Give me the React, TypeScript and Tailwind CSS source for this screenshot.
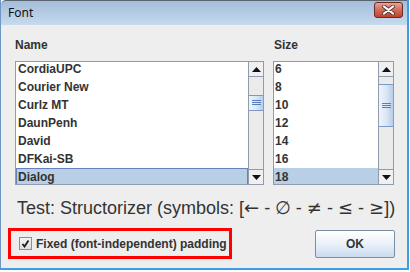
import React from "react";

const names = ["CordiaUPC", "Courier New", "Curlz MT", "DaunPenh", "David", "DFKai-SB", "Dialog"];
const sizes = ["6", "8", "10", "12", "14", "16", "18"];

function ScrollBar({ thumbTop, thumbH }: { thumbTop: number; thumbH: number }) {
  return (
    <div className="w-[15px] h-full border-l border-[#8e9cae] bg-[#ebebeb] relative flex flex-col justify-between">
      <div className="h-[15px] border-b border-[#8e9cae] bg-[#f0f0f0] flex items-center justify-center">
        <svg width="9" height="5" viewBox="0 0 9 5"><path d="M0 5 L4.5 0 L9 5 Z" fill="#111" /></svg>
      </div>
      <div
        className="absolute left-0 right-0 border-y border-[#7b98c6] bg-gradient-to-r from-[#eef4fb] via-[#dce8f6] to-[#b7cde8] flex items-center justify-center"
        style={{ top: thumbTop, height: thumbH }}
      >
        <svg width="9" height="6" viewBox="0 0 9 6">
          <path d="M0 0.5 H9 M0 2.5 H9 M0 4.5 H9" stroke="#5a7fb8" strokeWidth="1" />
        </svg>
      </div>
      <div className="h-[15px] border-t border-[#8e9cae] bg-[#f0f0f0] flex items-center justify-center">
        <svg width="9" height="5" viewBox="0 0 9 5"><path d="M0 0 L4.5 5 L9 0 Z" fill="#111" /></svg>
      </div>
    </div>
  );
}

export default function App() {
  const dialog = { fontFamily: '"Liberation Sans", Arial, sans-serif' };
  const sym = { fontFamily: '"DejaVu Sans", sans-serif' };
  return (
    <div className="w-[410px] h-[272px] bg-white overflow-hidden" style={dialog}>
      <div className="w-[409px] h-[270px] flex flex-col border-l border-r-2 border-b-2 border-l-[#6f97c6] border-r-[#3c9fe4] border-b-[#3c9fe4]">
        <div className="h-[25px] shrink-0 border-t border-[#5d6670] rounded-tl-[5px] bg-gradient-to-b from-[#a3bddb] to-[#c7daee] flex items-center justify-between pl-[7px] pr-[4px]">
          <span className="text-[12px] text-[#111] leading-none" style={{ fontFamily: '"Noto Sans", "Open Sans", sans-serif' }}>Font</span>
          <div className="w-[29px] h-[16px] mt-[-7px] rounded-[3px] border border-[#6b2b24] bg-gradient-to-b from-[#e4a496] via-[#cf6b58] to-[#c0402c] flex items-center justify-center">
            <svg width="13" height="10" viewBox="0 0 13 10">
              <path d="M2 1.5 L11 8.5 M11 1.5 L2 8.5" stroke="#5b3a38" strokeWidth="4" strokeLinecap="round" />
              <path d="M2 1.5 L11 8.5 M11 1.5 L2 8.5" stroke="#ffffff" strokeWidth="2.2" strokeLinecap="round" />
            </svg>
          </div>
        </div>
        <div className="flex-1 bg-[#eeeeee] pt-[13px] pl-[14px] flex flex-col">
          <div className="flex">
            <div className="w-[249px] flex flex-col">
              <div className="text-[12px] font-bold leading-[14px] text-[#333]">Name</div>
              <div className="mt-[9px] h-[124px] border border-[#8e9cae] bg-white flex">
                <div className="flex-1 overflow-hidden">
                  <div className="mt-[-2px]">
                    {names.map((n, i) => (
                      <div
                        key={n}
                        className={
                          i === names.length - 1
                            ? "h-[18px] leading-[16px] pl-[1px] text-[12px] font-bold text-[#333] bg-[#b8cfe5] border border-[#6382bf]"
                            : "h-[18px] leading-[18px] pl-[2px] text-[12px] font-bold text-[#333]"
                        }
                      >
                        {n}
                      </div>
                    ))}
                  </div>
                </div>
                <ScrollBar thumbTop={33} thumbH={16} />
              </div>
            </div>
            <div className="w-[121px] ml-[9px] flex flex-col">
              <div className="text-[12px] font-bold leading-[14px] text-[#333] pl-[1px]">Size</div>
              <div className="mt-[9px] h-[124px] border border-[#8e9cae] bg-white flex">
                <div className="flex-1 overflow-hidden">
                  <div className="mt-[-2px]">
                    {sizes.map((n, i) => (
                      <div
                        key={n}
                        className={
                          i === sizes.length - 1
                            ? "h-[18px] leading-[18px] pl-[1px] text-[12px] font-bold text-[#333] bg-[#b8cfe5]"
                            : "h-[18px] leading-[18px] pl-[1px] text-[12px] font-bold text-[#333]"
                        }
                      >
                        {n}
                      </div>
                    ))}
                  </div>
                </div>
                <ScrollBar thumbTop={22} thumbH={43} />
              </div>
            </div>
          </div>
          <div className="mt-[13px] ml-[2px] text-[18px] leading-[20px] text-[#333] whitespace-nowrap">
            Test: Structorizer (symbols: [<span style={sym}>←</span> - <span style={sym}>∅</span> - <span style={sym}>≠</span> - <span style={sym}>≤</span> - <span style={sym}>≥</span>])
          </div>
          <div className="mt-[10px] ml-[-7px] pr-[12px] flex items-center justify-between">
            <div className="w-[224px] h-[31px] border-[3px] border-[#ff0000] flex items-center pl-[8px]">
              <div className="w-[13px] h-[13px] border border-[#8e8f8f] bg-gradient-to-b from-[#f4f4f4] to-[#dcdcdc] flex items-center justify-center">
                <svg width="9" height="9" viewBox="0 0 9 9">
                  <path d="M1.5 5 L3.5 7.5 L7.5 1.5" stroke="#1a1a1a" strokeWidth="1.8" fill="none" />
                </svg>
              </div>
              <span className="ml-[4px] text-[12px] font-bold text-[#333] leading-none">Fixed (font-independent) padding</span>
            </div>
            <div className="w-[80px] h-[28px] border border-[#7a8ea5] rounded-[2px] bg-gradient-to-b from-[#ffffff] via-[#eaf1f9] to-[#c9dbee] flex items-center justify-center text-[12px] font-bold text-[#333]">
              OK
            </div>
          </div>
        </div>
      </div>
    </div>
  );
}
